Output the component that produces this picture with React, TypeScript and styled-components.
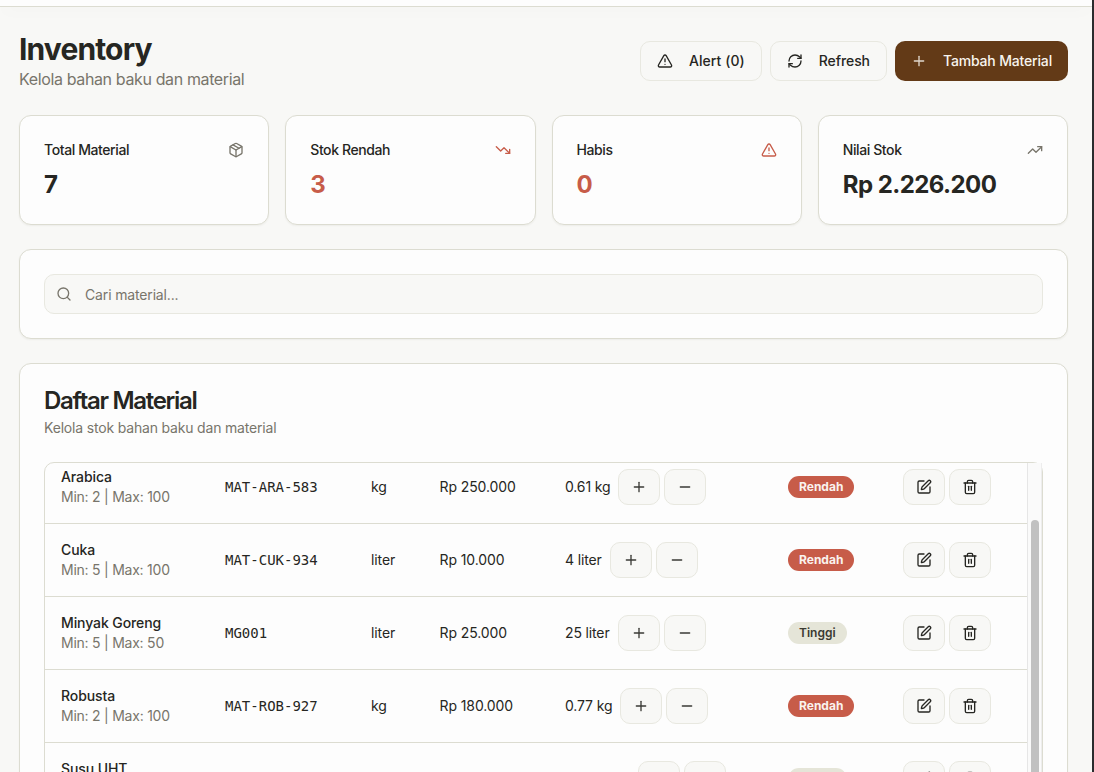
import React from "react";
import styled, { createGlobalStyle } from "styled-components";
import {
  TriangleAlert,
  RefreshCw,
  Plus,
  Minus,
  Package,
  TrendingDown,
  TrendingUp,
  Search,
  SquarePen,
} from "lucide-react";

const color = {
  page: "#f8f8f6",
  card: "#fdfdfd",
  border: "#dcdcd1",
  softBorder: "#e8e8e0",
  text: "#262622",
  muted: "#78756b",
  brown: "#633a17",
  red: "#c75c49",
  neutral: "#e5e5d8",
};

const GlobalStyle = createGlobalStyle`
  *, *::before, *::after { box-sizing: border-box; }
  html, body { margin: 0; height: 772px; overflow: hidden; }
  body {
    font-family: Inter, "Liberation Sans", sans-serif;
    font-size: 14px;
    line-height: 20px;
    color: ${color.text};
    background: ${color.page};
    -webkit-font-smoothing: antialiased;
  }
  h1, h2, p { margin: 0; }
  button, input { font: inherit; color: inherit; letter-spacing: inherit; }
  svg { display: block; flex-shrink: 0; }
`;

const Shell = styled.div`
  height: 772px;
  overflow: hidden;
  background: ${color.page};
  border-right: 2px solid #2b2c2e;
`;

const TopBar = styled.header`
  height: 7px;
  background: ${color.card};
  border-bottom: 1px solid ${color.border};
  box-shadow: 0 4px 16px -2px rgba(60, 60, 40, 0.06);
`;

const Main = styled.main`
  display: flex;
  flex-direction: column;
  gap: 24px;
  padding: 24px 24px 24px 19px;
`;

const PageHeader = styled.div`
  display: flex;
  align-items: center;
  justify-content: space-between;
  height: 60px;
`;

const PageTitle = styled.h1`
  padding-top: 1px;
  font-size: 30px;
  line-height: 35px;
  font-weight: 700;
  letter-spacing: -0.86px;
`;

const PageSubtitle = styled.p`
  font-size: 16px;
  line-height: 24px;
  letter-spacing: -0.37px;
  color: ${color.muted};
`;

const ButtonGroup = styled.div`
  display: flex;
  gap: 8px;
`;

const Button = styled.button<{ $primary?: boolean; $tracking?: number }>`
  display: flex;
  align-items: center;
  gap: 16px;
  height: 40px;
  padding: 0 16px;
  border: ${(p) => (p.$primary ? "0" : `1px solid ${color.softBorder}`)};
  border-radius: 10px;
  background: ${(p) => (p.$primary ? color.brown : color.page)};
  color: ${(p) => (p.$primary ? "#f8f4ee" : color.text)};
  font-weight: 500;
  letter-spacing: ${(p) => p.$tracking ?? 0}px;
  white-space: nowrap;
`;

const Card = styled.section`
  padding: 24px;
  border: 1px solid ${color.border};
  border-radius: 12px;
  background: ${color.card};
  box-shadow: 0 1px 2px rgba(60, 60, 40, 0.06);
`;

const Stats = styled.div`
  display: grid;
  grid-template-columns: repeat(4, 1fr);
  gap: 16px;
`;

const StatHead = styled.div<{ $alert?: boolean }>`
  display: flex;
  align-items: center;
  justify-content: space-between;
  height: 20px;
  margin-bottom: 8px;
  svg { color: ${(p) => (p.$alert ? color.red : color.muted)}; }
`;

const StatLabel = styled.span`
  font-weight: 500;
  letter-spacing: -0.4px;
`;

const StatValue = styled.div<{ $alert?: boolean }>`
  height: 32px;
  padding-top: 1px;
  font-size: 24px;
  line-height: 32px;
  font-weight: 700;
  letter-spacing: -0.56px;
  color: ${(p) => (p.$alert ? color.red : color.text)};
`;

const SearchBox = styled.label`
  display: flex;
  align-items: center;
  gap: 13px;
  height: 40px;
  padding: 0 12px 0 11px;
  border: 1px solid ${color.softBorder};
  border-radius: 10px;
  background: ${color.page};
  color: ${color.muted};
`;

const SearchInput = styled.input`
  flex: 1;
  height: 22px;
  padding: 0;
  border: 0;
  outline: 0;
  background: transparent;
  letter-spacing: -0.15px;
  &::placeholder { color: ${color.muted}; opacity: 1; }
`;

const ListTitle = styled.h2`
  height: 24px;
  padding-top: 1px;
  font-size: 24px;
  line-height: 24px;
  font-weight: 600;
  letter-spacing: -1.3px;
`;

const ListSubtitle = styled.p`
  margin: 6px 0 24px;
  letter-spacing: -0.18px;
  color: ${color.muted};
`;

const TableFrame = styled.div`
  display: flex;
  height: 600px;
  border: 1px solid ${color.border};
  border-radius: 10px;
`;

const Viewport = styled.div`
  width: 982px;
  overflow: hidden;
  border-radius: 9px 0 0 9px;
`;

const Rows = styled.div`
  margin-top: -12px;
`;

const Row = styled.div`
  display: grid;
  grid-template-columns: 164px 146px 68.5px 125.5px 223px 115px 140px;
  align-items: center;
  height: 73px;
  border-bottom: 1px solid ${color.border};
`;

const Cell = styled.div`
  padding-left: 16px;
  letter-spacing: -0.1px;
  white-space: nowrap;
`;

const Name = styled.div`
  font-weight: 500;
`;

const Limits = styled.div`
  letter-spacing: -0.24px;
  color: ${color.muted};
`;

const Code = styled(Cell)`
  font-family: "DejaVu Sans Mono", monospace;
  letter-spacing: 0;
`;

const Controls = styled(Cell)`
  display: flex;
  align-items: center;
  gap: 4px;
`;

const Amount = styled.span`
  margin-right: 4px;
  letter-spacing: -0.14px;
`;

const IconButton = styled.button`
  display: flex;
  align-items: center;
  justify-content: center;
  width: 42px;
  height: 36px;
  padding: 0;
  border: 1px solid ${color.softBorder};
  border-radius: 10px;
  background: ${color.page};
`;

const Badge = styled.span<{ $low?: boolean }>`
  display: inline-block;
  padding: 3px 11px;
  border-radius: 11px;
  font-size: 12px;
  line-height: 16px;
  font-weight: ${(p) => (p.$low ? 700 : 600)};
  letter-spacing: 0;
  vertical-align: middle;
  background: ${(p) => (p.$low ? color.red : color.neutral)};
  color: ${(p) => (p.$low ? "#faf3ee" : "#3b3a32")};
`;

const Track = styled.div`
  width: 15px;
  padding: 57px 3px 0;
  border-left: 1px solid #e6e6e6;
  border-right: 1px solid #ededed;
  background: #fafafa;
`;

const Thumb = styled.div`
  width: 8px;
  height: 400px;
  border-radius: 4px;
  background: #c1c1c1;
`;

const TrashIcon = () => (
  <svg width="16" height="16" viewBox="0 0 24 24" fill="none" stroke="currentColor" strokeWidth="2" strokeLinecap="round" strokeLinejoin="round">
    <path d="M3 6h18" />
    <path d="M19 6v14c0 1-1 2-2 2H7c-1 0-2-1-2-2V6" />
    <path d="M8 6V4c0-1 1-2 2-2h4c1 0 2 1 2 2v2" />
    <path d="M10 11v6" />
    <path d="M14 11v6" />
  </svg>
);

const stats = [
  { label: "Total Material", value: "7", Icon: Package },
  { label: "Stok Rendah", value: "3", Icon: TrendingDown, alert: true },
  { label: "Habis", value: "0", Icon: TriangleAlert, alert: true },
  { label: "Nilai Stok", value: "Rp 2.226.200", Icon: TrendingUp },
];

const materials = [
  { name: "Arabica", min: 2, max: 100, code: "MAT-ARA-583", unit: "kg", price: "Rp 250.000", stock: "0.61 kg", low: true },
  { name: "Cuka", min: 5, max: 100, code: "MAT-CUK-934", unit: "liter", price: "Rp 10.000", stock: "4 liter", low: true },
  { name: "Minyak Goreng", min: 5, max: 50, code: "MG001", unit: "liter", price: "Rp 25.000", stock: "25 liter", low: false },
  { name: "Robusta", min: 2, max: 100, code: "MAT-ROB-927", unit: "kg", price: "Rp 180.000", stock: "0.77 kg", low: true },
  { name: "Susu UHT", min: 5, max: 100, code: "MAT-SUS-412", unit: "liter", price: "Rp 20.000", stock: "28.85 liter", low: false },
];

export default function App() {
  return (
    <Shell>
      <GlobalStyle />
      <TopBar />
      <Main>
        <PageHeader>
          <div>
            <PageTitle>Inventory</PageTitle>
            <PageSubtitle>Kelola bahan baku dan material</PageSubtitle>
          </div>
          <ButtonGroup>
            <Button $tracking={0.07}><TriangleAlert size={16} />Alert (0)</Button>
            <Button $tracking={-0.08}><RefreshCw size={16} />Refresh</Button>
            <Button $primary $tracking={-0.17}><Plus size={16} opacity={0.85} />Tambah Material</Button>
          </ButtonGroup>
        </PageHeader>

        <Stats>
          {stats.map(({ label, value, Icon, alert }) => (
            <Card key={label}>
              <StatHead $alert={alert}>
                <StatLabel>{label}</StatLabel>
                <Icon size={16} />
              </StatHead>
              <StatValue $alert={alert}>{value}</StatValue>
            </Card>
          ))}
        </Stats>

        <Card>
          <SearchBox>
            <Search size={16} />
            <SearchInput placeholder="Cari material..." />
          </SearchBox>
        </Card>

        <Card>
          <ListTitle>Daftar Material</ListTitle>
          <ListSubtitle>Kelola stok bahan baku dan material</ListSubtitle>
          <TableFrame>
            <Viewport>
              <Rows>
                {materials.map((m) => (
                  <Row key={m.code}>
                    <Cell>
                      <Name>{m.name}</Name>
                      <Limits>Min: {m.min} | Max: {m.max}</Limits>
                    </Cell>
                    <Code>{m.code}</Code>
                    <Cell>{m.unit}</Cell>
                    <Cell>{m.price}</Cell>
                    <Controls>
                      <Amount>{m.stock}</Amount>
                      <IconButton aria-label="Tambah stok"><Plus size={16} opacity={0.9} /></IconButton>
                      <IconButton aria-label="Kurangi stok"><Minus size={16} opacity={0.9} /></IconButton>
                    </Controls>
                    <Cell><Badge $low={m.low}>{m.low ? "Rendah" : "Tinggi"}</Badge></Cell>
                    <Controls>
                      <IconButton aria-label="Edit"><SquarePen size={16} /></IconButton>
                      <IconButton aria-label="Hapus"><TrashIcon /></IconButton>
                    </Controls>
                  </Row>
                ))}
              </Rows>
            </Viewport>
            <Track><Thumb /></Track>
          </TableFrame>
        </Card>
      </Main>
    </Shell>
  );
}
